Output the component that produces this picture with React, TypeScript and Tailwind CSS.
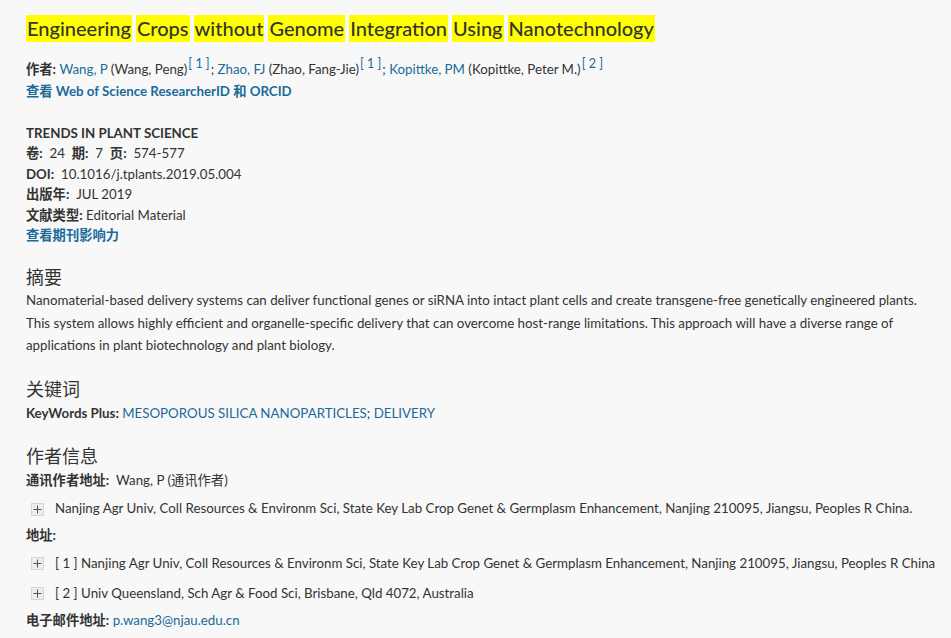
const link = "text-[#1a6a9a]";

function Plus() {
  return (
    <span className="inline-flex items-center justify-center w-[13px] h-[13px] border border-[#d6d6d6] bg-[#ececec] mr-[11px] shrink-0">
      <svg width="9" height="9" viewBox="0 0 9 9">
        <path d="M4.5 0.5v8M0.5 4.5h8" stroke="#555" strokeWidth="1" />
      </svg>
    </span>
  );
}

function Sup({ n }: { n: number }) {
  return <sup className={`${link} text-[12.5px] top-[-6px] mx-[1px]`}>[ {n} ]</sup>;
}

export default function App() {
  const titleWords = ["Engineering", "Crops", "without", "Genome", "Integration", "Using", "Nanotechnology"];
  return (
    <main className="min-h-screen w-full bg-[#f8f8f8] text-[#333] font-['Lato','Noto_Sans_CJK_SC',sans-serif] text-[13.3px] px-[26px] pt-[15px]">
      <h1 className="text-[20px] leading-[28px] flex flex-wrap gap-x-[4px] font-medium">
        {titleWords.map((w) => (
          <span key={w} className="inline-block bg-[#ffff00] px-[1px] leading-[27px]">{w}</span>
        ))}
      </h1>

      <div className="mt-[16px] leading-[22px]">
        <div>
          <b>作者:</b> <span className={link}>Wang, P</span> (Wang, Peng)<Sup n={1} />; <span className={link}>Zhao, FJ</span> (Zhao, Fang-Jie)<Sup n={1} />; <span className={link}>Kopittke, PM</span> (Kopittke, Peter M.)<Sup n={2} />
        </div>
        <div className={`${link} font-bold`}>查看 Web of Science ResearcherID 和 ORCID</div>
      </div>

      <div className="mt-[21px] leading-[20.4px]">
        <div className="font-bold">TRENDS IN PLANT SCIENCE</div>
        <div><b>卷:</b>&nbsp; 24&nbsp; <b>期:</b>&nbsp; 7&nbsp; <b>页:</b>&nbsp; 574-577</div>
        <div><b>DOI:</b>&nbsp; 10.1016/j.tplants.2019.05.004</div>
        <div><b>出版年:</b>&nbsp; JUL 2019</div>
        <div><b>文献类型:</b> Editorial Material</div>
        <div className={`${link} font-bold`}>查看期刊影响力</div>
      </div>

      <section className="mt-[20px]">
        <h2 className="text-[18px] leading-[24px]">摘要</h2>
        <p className="leading-[22.5px] mr-[-6px]">
          Nanomaterial-based delivery systems can deliver functional genes or siRNA into intact plant cells and create transgene-free genetically engineered plants. This system allows highly efficient and organelle-specific delivery that can overcome host-range limitations. This approach will have a diverse range of applications in plant biotechnology and plant biology.
        </p>
      </section>

      <section className="mt-[20px]">
        <h2 className="text-[18px] leading-[25px]">关键词</h2>
        <div className="leading-[22px]">
          <b>KeyWords Plus:</b> <span className={link}>MESOPOROUS SILICA NANOPARTICLES</span>; <span className={link}>DELIVERY</span>
        </div>
      </section>

      <section className="mt-[20px]">
        <h2 className="text-[18px] leading-[25px]">作者信息</h2>
        <div className="leading-[22px]"><b>通讯作者地址:</b>&nbsp; Wang, P (通讯作者)</div>
        <div className="flex items-center h-[29px] pl-[5px] mt-[4px] whitespace-nowrap">
          <Plus />
          <span>Nanjing Agr Univ, Coll Resources &amp; Environm Sci, State Key Lab Crop Genet &amp; Germplasm Enhancement, Nanjing 210095, Jiangsu, Peoples R China.</span>
        </div>
        <div className="leading-[22px] font-bold">地址:</div>
        <div className="flex items-center h-[30px] pl-[5px] mt-[3px] whitespace-nowrap">
          <Plus />
          <span>[ 1 ] Nanjing Agr Univ, Coll Resources &amp; Environm Sci, State Key Lab Crop Genet &amp; Germplasm Enhancement, Nanjing 210095, Jiangsu, Peoples R China</span>
        </div>
        <div className="flex items-center h-[30px] pl-[5px] whitespace-nowrap">
          <Plus />
          <span>[ 2 ] Univ Queensland, Sch Agr &amp; Food Sci, Brisbane, Qld 4072, Australia</span>
        </div>
        <div className="leading-[22px]"><b>电子邮件地址:</b> <span className={link}>p.wang3@njau.edu.cn</span></div>
      </section>
    </main>
  );
}
